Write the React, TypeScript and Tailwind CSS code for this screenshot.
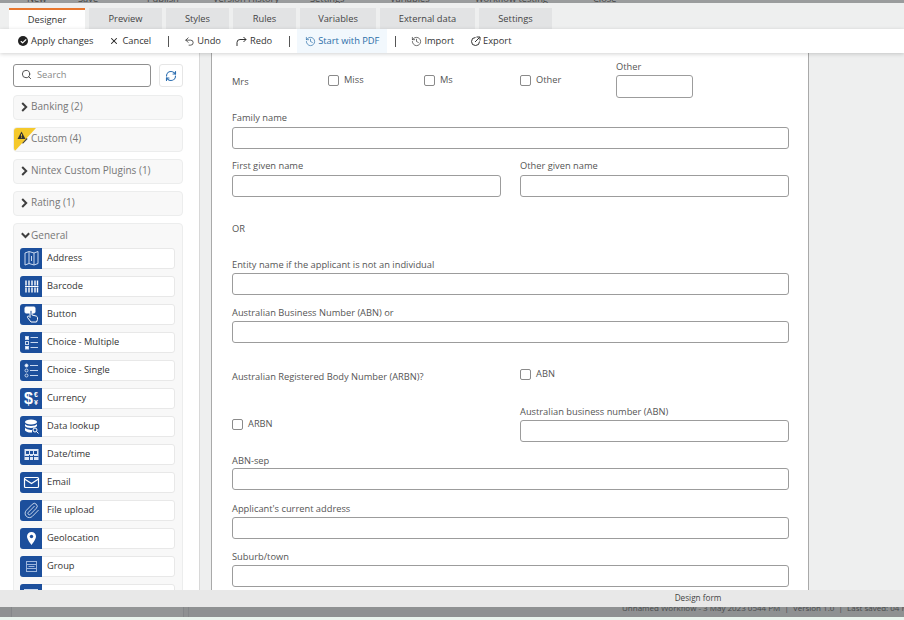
import type { ReactNode } from "react";
import { Check, History, Paperclip, RefreshCw, Search, Undo2, X } from "lucide-react";

const tabs = ["Designer", "Preview", "Styles", "Rules", "Variables", "External data", "Settings"];
const tabWidths = ["w-[76px]", "w-[73px]", "w-[63px]", "w-[63px]", "w-[76px]", "w-[95px]", "w-[73px]"];

const topItems = [
  { label: "New", width: "w-[51px]" },
  { label: "Save", width: "w-[69px]" },
  { label: "Publish", width: "w-[66px]" },
  { label: "Version History", width: "w-[97px]" },
  { label: "Settings", width: "w-[80px]" },
  { label: "Variables", width: "w-[85px]" },
  { label: "Workflow testing", width: "w-[118px]" },
  { label: "Close", width: "w-[40px]" },
];

const svgProps = { width: 17, height: 17, viewBox: "0 0 17 17", fill: "none", stroke: "#c9d8ef", strokeWidth: 1 };

const widgets: { name: string; icon: ReactNode }[] = [
  {
    name: "Address",
    icon: (
      <svg {...svgProps}>
        <path d="M2 3l4-1.500 5 1.500 4-1.500v12l-4 1.500-5-1.500-4 1.500z" />
        <path d="M6 2v11.500M11 3v12M8.500 6v5" />
      </svg>
    ),
  },
  {
    name: "Barcode",
    icon: (
      <svg {...svgProps} stroke="#ffffff">
        <path d="M3 2.500v5M6 2.500v5M9 2.500v5M12 2.500v5M14.500 2.500v5M3 9.500v5M6 9.500v5M9 9.500v5M12 9.500v5M14.500 9.500v5" strokeWidth="1.400" />
        <path d="M2 8.500h13.500" />
      </svg>
    ),
  },
  {
    name: "Button",
    icon: (
      <svg {...svgProps} stroke="#ffffff">
        <rect x="2" y="1" width="10" height="6" rx="1" fill="#ffffff" />
        <path d="M7 5.500c0-1.500 2-1.500 2 0V9l4 1c1 .3 1.500 1 1.500 2v1.500l-1 2.500H8l-3.500-4.500c-.7-1 .7-2 1.500-1l1 1z" fill="#1c4f9c" />
      </svg>
    ),
  },
  {
    name: "Choice - Multiple",
    icon: (
      <svg {...svgProps}>
        <rect x="2.500" y="2.500" width="3" height="3" fill="#ffffff" />
        <rect x="2.500" y="7.500" width="3" height="3" />
        <rect x="2.500" y="12.500" width="3" height="2.500" fill="#ffffff" />
        <path d="M7.500 3.500h7.500M7.500 8.500h7.500M7.500 13.500h7.500" />
      </svg>
    ),
  },
  {
    name: "Choice - Single",
    icon: (
      <svg {...svgProps}>
        <circle cx="3.500" cy="3.500" r="1.500" fill="#ffffff" />
        <circle cx="3.500" cy="8.500" r="1.500" />
        <circle cx="3.500" cy="13.500" r="1.500" />
        <path d="M7 3.500h8M7 8.500h8M7 13.500h8" />
      </svg>
    ),
  },
  {
    name: "Currency",
    icon: (
      <div className="flex items-center gap-[1px] font-['Liberation_Sans',sans-serif] text-white">
        <span className="text-[16px] leading-none font-bold">$</span>
        <div className="flex flex-col text-[7px] leading-[8px] font-bold">
          <span>€</span>
          <span>¥</span>
        </div>
      </div>
    ),
  },
  {
    name: "Data lookup",
    icon: (
      <svg {...svgProps}>
        <ellipse cx="8" cy="4" rx="6" ry="2.500" fill="#ffffff" stroke="none" />
        <path d="M2 6c1 2.500 11 2.500 12 0v2c-1 2.500-11 2.500-12 0zM2 9.500c1 2 6 2.500 7 2.500v2.500c-3 .3-6-.5-7-2z" fill="#ffffff" stroke="none" />
        <circle cx="12" cy="12" r="2" stroke="#ffffff" />
        <path d="M13.500 13.500l2 2" stroke="#ffffff" />
      </svg>
    ),
  },
  {
    name: "Date/time",
    icon: (
      <svg {...svgProps}>
        <rect x="1.500" y="3" width="14" height="11" fill="#dce6f5" stroke="none" />
        <path d="M3 5h3v3H3zM7 5h3v3H7zM11 5h3v3h-3z" fill="#1c4f9c" stroke="none" />
        <path d="M1.500 10.500h14M6.500 9v5M10.500 9v5" stroke="#1c4f9c" />
      </svg>
    ),
  },
  {
    name: "Email",
    icon: (
      <svg {...svgProps} stroke="#ffffff" strokeWidth="1.200">
        <rect x="1.500" y="3.500" width="14" height="10" rx="1" />
        <path d="M1.500 5l7 4.500 7-4.500" />
      </svg>
    ),
  },
  { name: "File upload", icon: <Paperclip size={17} strokeWidth={1.25} className="text-[#dce6f5]" /> },
  {
    name: "Geolocation",
    icon: (
      <svg width="17" height="17" viewBox="0 0 17 17">
        <path d="M8.500 2a4.500 4.500 0 0 1 4.500 4.500c0 3-4.500 8.500-4.500 8.500S4 9.500 4 6.500A4.500 4.500 0 0 1 8.500 2z" fill="#ffffff" />
        <circle cx="8.500" cy="6.500" r="1.700" fill="#1c4f9c" />
      </svg>
    ),
  },
  {
    name: "Group",
    icon: (
      <svg {...svgProps} stroke="#9db6dd">
        <rect x="3.500" y="3.500" width="10" height="10" />
        <path d="M3.500 6.500h10M3.500 10.500h10M5.500 8.500h6" />
      </svg>
    ),
  },
  { name: "Label", icon: <div className="h-3 w-3.5 bg-[#c9d8ef]" /> },
];

function ArrowRight() {
  return (
    <svg width="7" height="10" viewBox="0 0 7 10" fill="none" stroke="#3f3f3f" strokeWidth="2" className="shrink-0">
      <path d="M1.200 1l4 4-4 4" />
    </svg>
  );
}

function ArrowDown() {
  return (
    <svg width="9" height="7" viewBox="0 0 9 7" fill="none" stroke="#3f3f3f" strokeWidth="2" className="shrink-0">
      <path d="M.8 1.200l3.700 3.800 3.700-3.800" />
    </svg>
  );
}

function Collapsed({ label, warn }: { label: string; warn?: boolean }) {
  return (
    <div className="relative flex h-[25px] items-center overflow-hidden rounded border border-[#eceded] bg-[#f8f8f8] pb-[2px] pl-[7px] text-[10px] text-[#777]">
      <ArrowRight />
      {warn ? (
        <div className="absolute top-0 left-0">
          <svg width="23" height="25" viewBox="0 0 23 25">
            <path d="M0 0h22L0 24z" fill="#f5c92c" />
            <path d="M7.500 3.500l4 7.500h-8z" fill="#333" />
            <path d="M7.500 6v2.500M7.500 9.300v.8" stroke="#f5c92c" strokeWidth=".9" />
          </svg>
        </div>
      ) : null}
      <span className="ml-[3px]">{label}</span>
    </div>
  );
}

function Field({ label, gap, className }: { label: string; gap?: string; className?: string }) {
  return (
    <div className={className}>
      <div className="h-[14px] leading-[16px]">{label}</div>
      <div className={`h-[22px] rounded-[3px] border border-[#9c9c9c] bg-white ${gap ?? "mt-[2px]"}`} />
    </div>
  );
}

function Check2({ label, className }: { label: string; className?: string }) {
  return (
    <div className={`flex h-[14px] items-center gap-[5px] ${className ?? ""}`}>
      <div className="h-[11px] w-[11px] rounded-[2px] border border-[#8a8a8a] bg-white" />
      <span>{label}</span>
    </div>
  );
}

function Divider() {
  return <div className="h-[11px] w-px bg-[#555]" />;
}

export default function App() {
  return (
    <div className="flex h-[620px] w-[904px] flex-col overflow-hidden bg-[#eeefef] font-['Open_Sans',sans-serif] text-[9.3px] text-[#555]">
      {/* top strip of the page behind the dialog */}
      <div className="flex h-[3px] shrink-0 items-end overflow-hidden bg-[#9a9c9d] pl-[27px] leading-[9px] whitespace-nowrap text-[#444]">
        {topItems.map((item) => (
          <span key={item.label} className={`shrink-0 ${item.width}`}>
            {item.label}
          </span>
        ))}
      </div>

      {/* tabs */}
      <div className="flex h-[26px] shrink-0 gap-[4px] bg-[#eeefef] pt-[5px] pl-[9px]">
        {tabs.map((tab, i) => (
          <div
            key={tab}
            className={`flex items-center justify-center ${tabWidths[i]} ${
              i === 0 ? "border-t-2 border-[#e8772e] bg-white text-[#333]" : "bg-[#e2e3e4] text-[#444]"
            }`}
          >
            {tab}
          </div>
        ))}
      </div>

      {/* toolbar */}
      <div className="z-10 flex h-[24px] shrink-0 items-center bg-white pl-[18px] text-[#333] shadow-[0_1px_4px_rgba(0,0,0,0.18)]">
        <div className="flex h-[10px] w-[10px] items-center justify-center rounded-full bg-[#222]">
          <Check size={7} strokeWidth={4} className="text-white" />
        </div>
        <span className="ml-[3px]">Apply changes</span>
        <X size={10} strokeWidth={2.5} className="ml-[16px] text-[#222]" />
        <span className="ml-[3px]">Cancel</span>
        <div className="ml-[17px]"><Divider /></div>
        <Undo2 size={11} strokeWidth={1.75} className="ml-[15px]" />
        <span className="ml-[2px]">Undo</span>
        <svg width="11" height="11" viewBox="0 0 11 11" fill="none" stroke="#333" strokeWidth="1" className="ml-[15px]">
          <path d="M1 10V6.500A3 3 0 0 1 4 3.500h6M7.500 1l2.500 2.500L7.500 6" />
        </svg>
        <span className="ml-[3px]">Redo</span>
        <div className="ml-[17px]"><Divider /></div>
        <div className="ml-[7px] flex h-[24px] items-center bg-[#f2f8fd] pr-[8px] pl-[8px] text-[#2a6da8]">
          <History size={11} strokeWidth={1.5} />
          <span className="ml-[2px]">Start with PDF</span>
        </div>
        <div className="ml-[8px]"><Divider /></div>
        <History size={11} strokeWidth={1.5} className="ml-[15px]" />
        <span className="ml-[2px]">Import</span>
        <svg width="11" height="11" viewBox="0 0 11 11" fill="none" stroke="#333" strokeWidth="1" className="ml-[16px]">
          <path d="M5.500 1.500a4 4 0 1 0 4 4M5 6l4.500-4.500M6.500 1h3.500v3.500" />
        </svg>
        <span className="ml-[2px]">Export</span>
      </div>

      <div className="flex min-h-0 flex-1">
        {/* sidebar */}
        <div className="flex w-[200px] shrink-0 flex-col overflow-hidden border-r border-[#d8d8d8] bg-white pt-[11px] pl-[13px]">
          <div className="flex w-[170px] shrink-0 gap-[8px]">
            <div className="flex h-[23px] w-[138px] items-center gap-[5px] rounded-[3px] border border-[#8f8f8f] pb-[2px] pl-[7px] text-[#888]">
              <Search size={11} strokeWidth={2} className="text-[#444]" />
              Search
            </div>
            <div className="flex h-[23px] w-[24px] items-center justify-center rounded-[3px] border border-[#e6e6e6]">
              <RefreshCw size={12} strokeWidth={2.25} className="text-[#2a6db0]" />
            </div>
          </div>
          <div className="mt-[8px] flex w-[170px] shrink-0 flex-col gap-[7px]">
            <Collapsed label="Banking (2)" />
            <Collapsed label="Custom (4)" warn />
            <Collapsed label="Nintex Custom Plugins (1)" />
            <Collapsed label="Rating (1)" />
            <div className="rounded border border-[#eceded] bg-[#f8f8f8] pt-[5px] pr-[7px] pl-[6px]">
              <div className="flex h-[13px] items-center pl-[1px] text-[10px] text-[#777]">
                <ArrowDown />
                <span className="ml-[1px]">General</span>
              </div>
              <div className="mt-[6px] flex flex-col gap-[7px]">
                {widgets.map((w) => (
                  <div key={w.name} className="flex h-[21px] items-center rounded-[3px] border border-[#e8e8e8] bg-white pb-[1px] text-[#333]">
                    <div className="-mb-[1px] -ml-px flex h-[21px] w-[22px] items-center justify-center rounded-l-[3px] bg-[#1c4f9c]">{w.icon}</div>
                    <span className="ml-[5px]">{w.name}</span>
                  </div>
                ))}
              </div>
            </div>
          </div>
        </div>

        {/* form canvas */}
        <div className="ml-[11px] flex w-[598px] shrink-0 flex-col overflow-hidden border-x border-[#a9a9a9] bg-white pr-[19px] pl-[20px]">
          <div className="flex h-[45px] shrink-0 items-start">
            <div className="mt-[22px] w-[96px]">Mrs</div>
            <Check2 label="Miss" className="mt-[20px] w-[96px]" />
            <Check2 label="Ms" className="mt-[20px] w-[96px]" />
            <Check2 label="Other" className="mt-[20px] w-[96px]" />
            <div className="mt-[7px]">
              <div className="h-[14px] leading-[14px]">Other</div>
              <div className="mt-[1px] h-[23px] w-[77px] rounded-[3px] border border-[#9c9c9c]" />
            </div>
          </div>
          <Field label="Family name" gap="mt-[3px]" className="mt-[12px] shrink-0" />
          <div className="mt-[9px] grid shrink-0 grid-cols-2 gap-x-[19px]">
            <Field label="First given name" gap="mt-[3px]" />
            <Field label="Other given name" gap="mt-[3px]" />
          </div>
          <div className="mt-[24px] h-[14px] shrink-0 leading-[16px]">OR</div>
          <Field label="Entity name if the applicant is not an individual" className="mt-[22px] shrink-0" />
          <Field label="Australian Business Number (ABN) or" className="mt-[10px] shrink-0" />
          <div className="mt-[23px] grid h-[14px] shrink-0 grid-cols-2 gap-x-[19px] leading-[14px]">
            <div className="mt-[4px]">Australian Registered Body Number (ARBN)?</div>
            <Check2 label="ABN" className="mt-[1px]" />
          </div>
          <div className="mt-[24px] grid shrink-0 grid-cols-2 gap-x-[19px]">
            <Check2 label="ARBN" className="mt-[13px] self-start" />
            <Field label="Australian business number (ABN)" />
          </div>
          <Field label="ABN-sep" gap="mt-[1px]" className="mt-[11px] shrink-0" />
          <Field label="Applicant's current address" className="mt-[11px] shrink-0" />
          <Field label="Suburb/town" className="mt-[10px] shrink-0" />
        </div>
        <div className="flex-1" />
      </div>

      {/* footer */}
      <div className="z-10 flex h-[17px] shrink-0 items-center justify-center bg-[#e8e8e8] pl-[492px] text-[8.2px] text-[#444]">Design form</div>
      <div className="flex h-[10px] shrink-0 overflow-hidden bg-[#8f9192] text-[8px] whitespace-nowrap text-[#4a4c4d]">
        <div className="ml-[11px] h-full w-[173px] shrink-0 border-x border-[#85878a] bg-[#939596]" />
        <div className="ml-[4px] h-full w-px shrink-0 bg-[#85878a]" />
        <div className="-mt-[6px] ml-[433px] shrink-0 leading-[14px]">Unnamed Workflow - 3 May 2023 0544 PM &nbsp;|&nbsp; Version 1.0 &nbsp;|&nbsp; Last saved: 04 May</div>
      </div>
      <div className="h-[3px] shrink-0 bg-[#eaf5ee]" />
    </div>
  );
}
